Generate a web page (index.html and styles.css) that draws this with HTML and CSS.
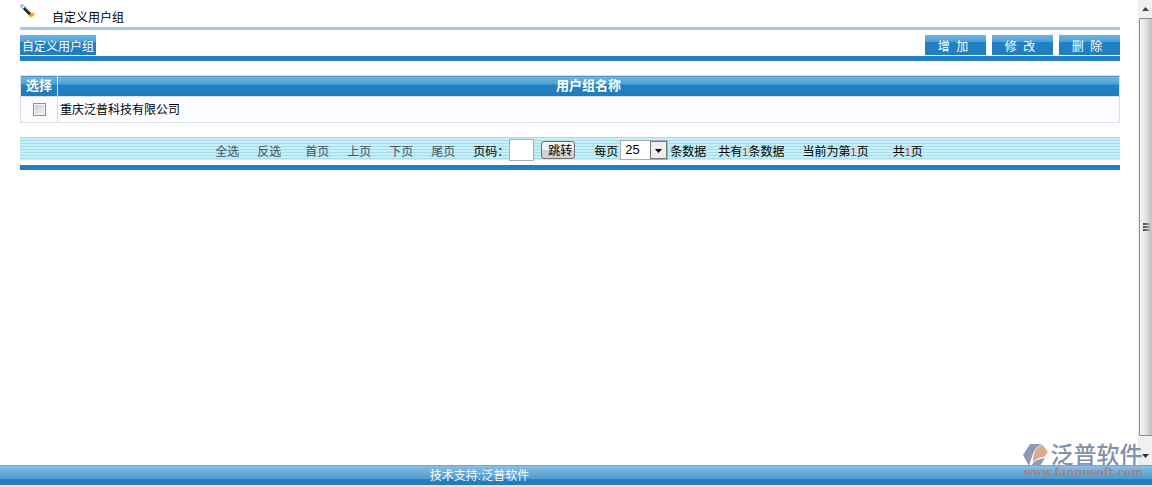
FILE: index.html
```html
<!DOCTYPE html>
<html lang="zh-CN">
<head>
<meta charset="utf-8">
<title>自定义用户组</title>
<link rel="stylesheet" href="styles.css">
</head>
<body>
<div class="workspace">
  <main class="content">
    <header class="page-title">
      <svg class="wand" width="16" height="16" viewBox="0 0 16 16" aria-hidden="true">
        <path d="M9 8l2 1 2-2v2l3 0-2 2 2 2-3-1-1 3-2-3-3 1 2-3z" fill="#ffd873"/>
        <path d="M10 9l4 1-1 2-3 1-1-2z" fill="#f39a1c"/>
        <path d="M3 3l7 7" stroke="#10131a" stroke-width="3"/>
        <path d="M4 3l6 6" stroke="#66788a" stroke-width="1"/>
        <path d="M1 3V1h2l2 2-2 2z" fill="#e6f5fc" stroke="#6c9bb8" stroke-width="1"/>
      </svg>
      <h1>自定义用户组</h1>
    </header>
    <nav class="toolbar">
      <span class="tab">自定义用户组</span>
      <div class="actions">
        <button type="button">增 加</button>
        <button type="button">修 改</button>
        <button type="button">删 除</button>
      </div>
    </nav>
    <table class="groups">
      <thead><tr><th class="pick">选择</th><th>用户组名称</th></tr></thead>
      <tbody><tr>
        <td class="pick"><input type="checkbox" class="check" aria-label="选择 重庆泛普科技有限公司"></td>
        <td>重庆泛普科技有限公司</td>
      </tr></tbody>
    </table>
    <div class="pager">
      <div class="links">
        <div class="link-pair"><a href="#">全选</a><a href="#">反选</a></div>
        <div class="link-pair"><a href="#">首页</a><a href="#">上页</a><a href="#">下页</a><a href="#">尾页</a></div>
      </div>
      <div class="jump">
        <label for="page">页码：</label>
        <input id="page" type="text" class="page-input">
        <button type="button" class="go">跳转</button>
      </div>
      <div class="size">
        <label for="size">每页</label>
        <span class="select-box">
          <select id="size"><option>25</option></select>
          <svg class="arrow" width="17" height="18" viewBox="0 0 17 18" aria-hidden="true">
            <rect x=".5" y=".5" width="16" height="17" fill="#eeeeee" stroke="#777777"/>
            <path d="M5 8h7L8.500 12z" fill="#000"/>
          </svg>
        </span>
        <span class="unit">条数据</span>
      </div>
      <span class="total">共有<b>1</b>条数据</span>
      <span class="current">当前为第<b>1</b>页</span>
      <span class="pages">共<b>1</b>页</span>
    </div>
  </main>
  <div class="scrollbar" aria-hidden="true">
    <svg class="scroll-arrow" width="7" height="4" viewBox="0 0 7 4"><path d="M0 4L3.500 0 7 4z" fill="#444"/></svg>
    <div class="thumb"><i></i><i></i><i></i></div>
    <svg class="scroll-arrow" width="7" height="4" viewBox="0 0 7 4"><path d="M0 0h7L3.500 4z" fill="#333"/></svg>
  </div>
</div>
<footer class="footer">技术支持:泛普软件</footer>
<div class="watermark">
  <div class="brand">
    <svg width="27" height="24" viewBox="0 0 27 24" aria-hidden="true">
      <path d="M7 1H19Q12 4 10 11Q8 16 6 23L0 12z" fill="#8e9bb4"/>
      <path d="M20 2L25 9L21 14Q14 14 10 20Q10 8 15 4Q17 2 20 2z" fill="#e2a88f"/>
      <path d="M22 15L17 23H8Q12 16 22 15z" fill="#8e9bb4"/>
    </svg>
    <span>泛普软件</span>
  </div>
  <div class="site">www.fanpusoft.com</div>
</div>
</body>
</html>
```
FILE: styles.css
```css
* { box-sizing: border-box; }
body {
  margin: 0;
  height: 100vh;
  display: flex;
  flex-direction: column;
  position: relative;
  overflow: hidden;
  background: #fff;
  color: #000;
  font: 12px/16px "Liberation Sans", "Noto Sans CJK SC", sans-serif;
}
button, input, select { font: inherit; }
.workspace { flex: 1; display: flex; min-height: 0; }
.content { flex: 1; padding: 0 18px 0 20px; }

.page-title {
  display: flex;
  gap: 16px;
  height: 30px;
  padding-top: 4px;
  border-bottom: 3px solid #9dcaee;
}
.page-title h1 { margin: 6px 0 0; font-size: 12px; font-weight: 400; }

.toolbar {
  display: flex;
  justify-content: space-between;
  margin-top: 5px;
  padding-bottom: 1px;
  border-bottom: 5px solid #217fc0;
}
.tab, .actions button {
  height: 20px;
  border: 0;
  background: linear-gradient(#72b5e3 0, #4a9fd7 7px, #1f82c5 7px, #237dbd 100%);
  color: #fff;
  line-height: 20px;
}
.tab { padding: 2px 2px 0; }
.actions { display: flex; gap: 6px; }
.actions button { width: 61px; padding: 2px 5px 0 0; word-spacing: 3px; }

.groups {
  width: 100%;
  margin-top: 14px;
  border-collapse: collapse;
  border: 1px solid #dcdee2;
}
.groups th, .groups td { border: 1px solid #dcdee2; }
.groups th {
  height: 21px;
  padding: 0;
  background: linear-gradient(#72b5e0 0, #4c9fd4 8px, #2183c3 8px, #237ab8 100%);
  color: #fff;
  font-size: 13px;
  line-height: 20px;
}
.groups td { height: 26px; padding: 0 2px; background: #fbfcff; }
.groups .pick { width: 37px; text-align: center; }
.check {
  appearance: none;
  display: block;
  width: 13px;
  height: 13px;
  margin: 0 auto;
  border: 1px solid #8e8f8f;
  background: linear-gradient(135deg, #c3c7ce, #f7f7f7);
  box-shadow: inset 0 0 0 1px #f4f4f4;
}

.pager {
  display: flex;
  justify-content: center;
  align-items: center;
  height: 33px;
  margin-top: 14px;
  padding: 2px 2px 5px 0;
  border-bottom: 5px solid #217fc0;
  background: repeating-linear-gradient(#a9dce7 0, #a9dce7 1px, #c5f0f8 1px, #c5f0f8 3px) 0 0 / 100% 23px no-repeat;
  white-space: nowrap;
}
.pager a, .pager label, .pager .unit, .total, .current, .pages {
  padding-top: 4px;
  line-height: 18px;
}
.links { display: flex; gap: 24px; }
.link-pair { display: flex; gap: 18px; }
.link-pair a { color: #465163; text-decoration: none; }
.jump, .size { display: flex; align-items: center; }
.jump { margin-left: 18px; }
.page-input {
  width: 25px;
  height: 22px;
  padding: 1px;
  border: 1px solid #a9abb3;
  background: #fff;
}
.go {
  width: 34px;
  height: 18px;
  margin-left: 7px;
  padding: 2px 0 0 4px;
  border: 1px solid #707070;
  border-radius: 3px;
  background: linear-gradient(#f2f2f2 50%, #d2d2d2 50%);
  line-height: 14px;
}
.size { margin-left: 19px; }
.select-box { position: relative; display: flex; margin: 0 2px; }
.select-box select {
  appearance: none;
  width: 48px;
  height: 20px;
  padding: 0 4px;
  border: 1px solid #a9abb3;
  border-radius: 0;
  background: #fff;
  color: #000;
  font-size: 13px;
}
.arrow { position: absolute; right: 1px; top: 1px; pointer-events: none; }
.pager b { color: #f00; font-weight: 400; font-size: 11px; }
.total { margin-left: 12px; }
.current { margin-left: 18px; }
.pages { margin-left: 24px; }

.scrollbar {
  width: 14px;
  display: flex;
  flex-direction: column;
  align-items: center;
  border-left: 1px solid #ececec;
  background: #f0f0f0;
}
.scroll-arrow { flex: none; margin: 7px 0; }
.thumb {
  flex: 1;
  width: 100%;
  display: flex;
  flex-direction: column;
  justify-content: center;
  align-items: center;
  gap: 1px;
  margin-bottom: 11px;
  border: 1px solid #8f8f8f;
  border-right: 0;
  border-radius: 2px 0 0 2px;
  background: linear-gradient(90deg, #f5f5f5, #e2e2e4 50%, #bfbfc4);
}
.thumb i { width: 7px; height: 2px; background: linear-gradient(90deg, #444, #aaa); }

.footer {
  height: 22px;
  padding-right: 193px;
  border-top: 1px solid #69a5f4;
  border-bottom: 2px solid #e4e6e8;
  background: linear-gradient(#88bfe6 0, #4b9bd2 13px, #2580bf 13px, #237ab7 100%);
  color: #fff;
  line-height: 20px;
  text-align: center;
}

.watermark {
  position: absolute;
  right: 9px;
  bottom: 8px;
  pointer-events: none;
}
.brand { display: flex; align-items: center; color: #8390aa; font-size: 23px; font-weight: 500; line-height: 24px; }
.site {
  color: #a08386;
  font: 700 11px/12px "DejaVu Serif", serif;
  text-align: center;
}
```
